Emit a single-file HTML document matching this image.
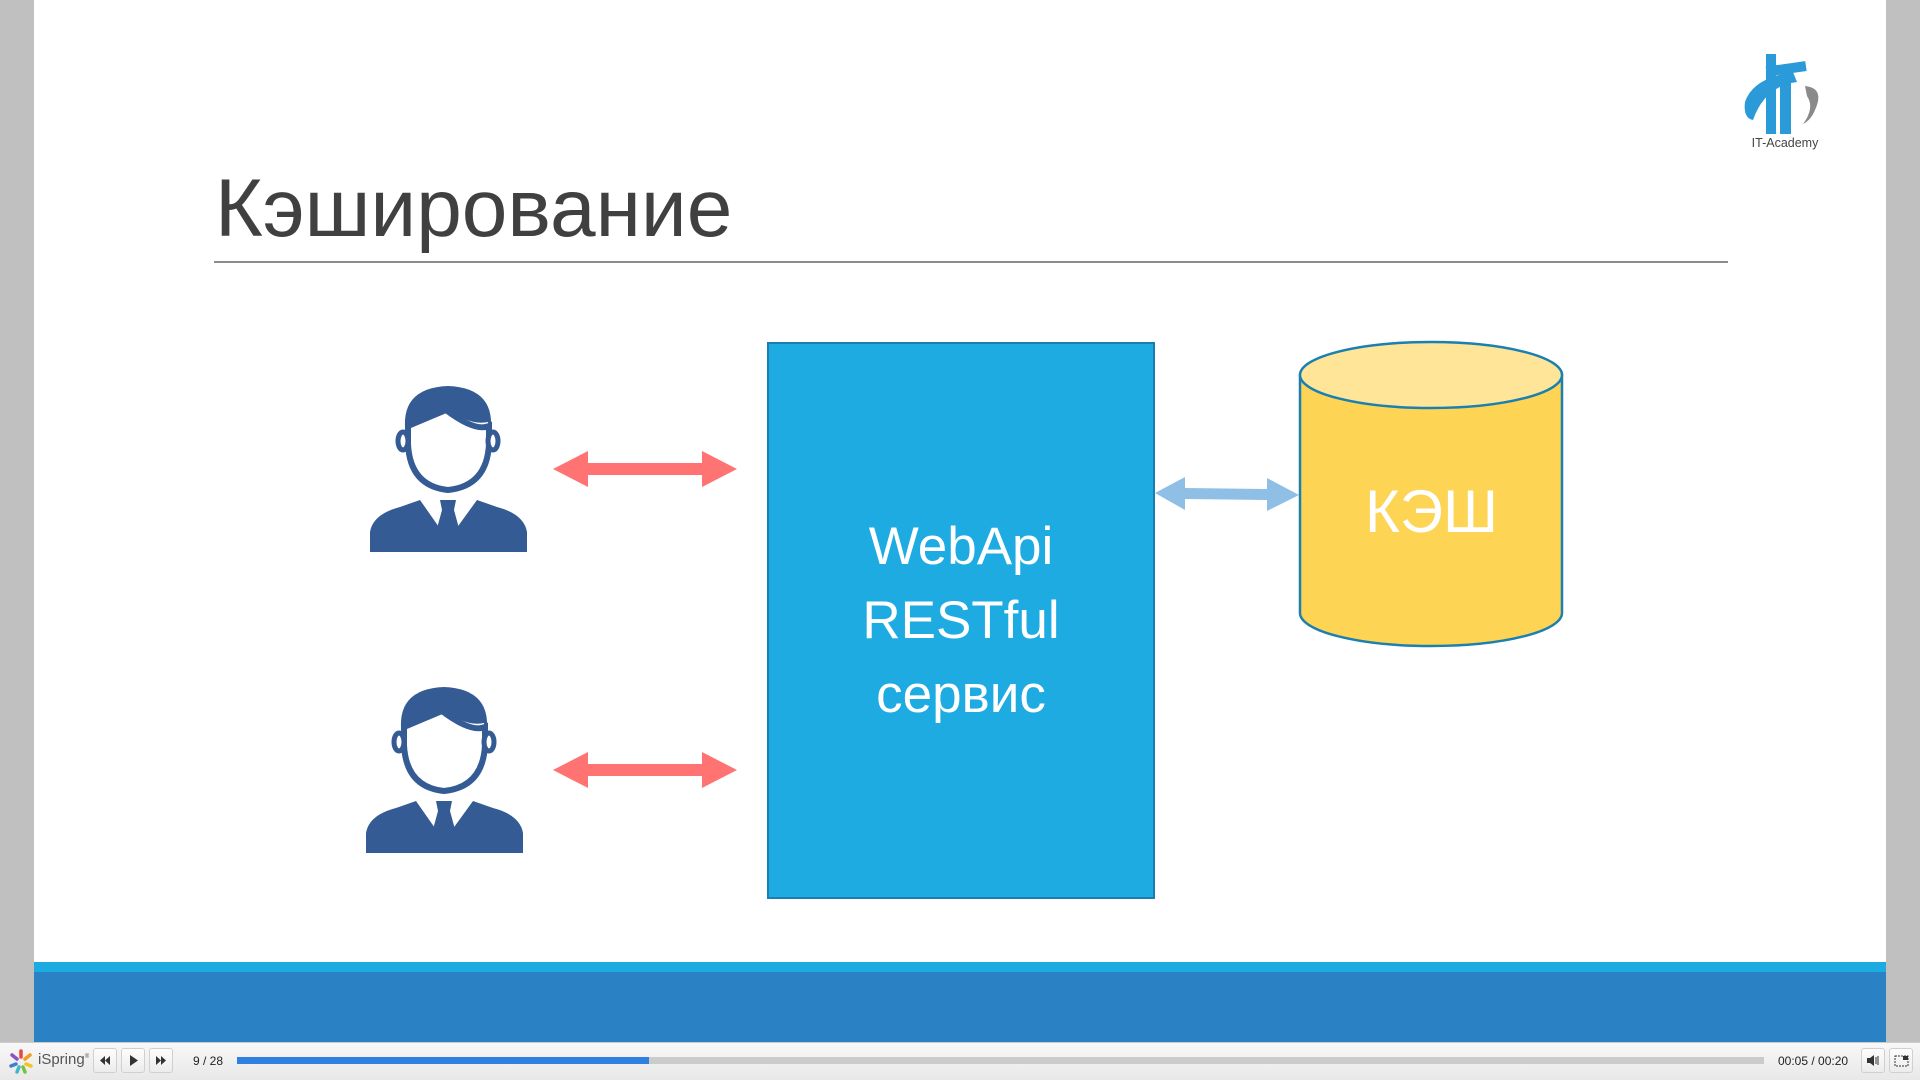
<!DOCTYPE html>
<html><head><meta charset="utf-8"><style>
*{margin:0;padding:0;box-sizing:border-box}
body{width:1920px;height:1080px;position:relative;overflow:hidden;background:#c0c0c0;font-family:"Liberation Sans",sans-serif}
.abs{position:absolute}
#slide{left:34px;top:0;width:1852px;height:1042px;background:#fff}
.btn{position:absolute;top:1048px;width:24px;height:25px;border:1px solid #d0d0d0;border-radius:3px;background:linear-gradient(#fdfdfd,#ececec)}
</style></head><body>
<div class="abs" id="slide"></div>
<div class="abs" style="left:215px;top:168px;font-size:82px;color:#404040;font-weight:300;line-height:1">Кэширование</div>
<div class="abs" style="left:214px;top:261px;width:1514px;height:2px;background:#8c8c8c"></div>

<!-- logo -->
<svg class="abs" style="left:1735px;top:48px" width="100" height="110" viewBox="0 0 100 110">
<path d="M70 38 Q90 40 80 62 Q76 72 68 76 Q80 60 72 48 Z" fill="#8a8a8a"/>
<path d="M10 54 Q18 30 58 24 L62 34 Q30 38 18 72 Q8 70 10 54 Z" fill="#2a9ad8"/>
<rect x="31" y="6" width="10" height="80" fill="#2a9ad8"/>
<rect x="45" y="26" width="11" height="60" fill="#2a9ad8"/>
<rect x="31" y="16" width="40" height="10" fill="#2a9ad8" transform="rotate(-8 50 20)"/>
<text x="50" y="99" font-size="12.5" fill="#444" text-anchor="middle" font-family="Liberation Sans">IT-Academy</text>
</svg>

<!-- persons -->
<svg class="abs" style="left:370px;top:386px" width="157" height="166" viewBox="0 0 157 166">
<path d="M0 166 L0 146 Q3 128 30 121 L50 114 L78 154 L107 114 L127 121 Q154 128 157 146 L157 166 Z" fill="#345b94"/>
<path d="M70 114 L86 114 L84 124 L90 146 L78 156 L66 146 L72 124 Z" fill="#345b94"/>
<path d="M76 24 Q105 46 119 40 L119 58 Q117 100 78 104 Q40 100 38 58 L38 40 Z" fill="#fff" stroke="#345b94" stroke-width="6"/>
<ellipse cx="33" cy="55" rx="5" ry="9" fill="#fff" stroke="#345b94" stroke-width="5"/>
<ellipse cx="123" cy="55" rx="5" ry="9" fill="#fff" stroke="#345b94" stroke-width="5"/>
<path d="M36 50 Q28 2 78 0 Q128 2 120 50 L118 36 Q100 40 76 22 Q56 36 40 40 Z" fill="#345b94"/>
</svg>
<svg class="abs" style="left:366px;top:687px" width="157" height="166" viewBox="0 0 157 166">
<path d="M0 166 L0 146 Q3 128 30 121 L50 114 L78 154 L107 114 L127 121 Q154 128 157 146 L157 166 Z" fill="#345b94"/>
<path d="M70 114 L86 114 L84 124 L90 146 L78 156 L66 146 L72 124 Z" fill="#345b94"/>
<path d="M76 24 Q105 46 119 40 L119 58 Q117 100 78 104 Q40 100 38 58 L38 40 Z" fill="#fff" stroke="#345b94" stroke-width="6"/>
<ellipse cx="33" cy="55" rx="5" ry="9" fill="#fff" stroke="#345b94" stroke-width="5"/>
<ellipse cx="123" cy="55" rx="5" ry="9" fill="#fff" stroke="#345b94" stroke-width="5"/>
<path d="M36 50 Q28 2 78 0 Q128 2 120 50 L118 36 Q100 40 76 22 Q56 36 40 40 Z" fill="#345b94"/>
</svg>

<!-- red arrows -->
<svg class="abs" style="left:550px;top:448px" width="190" height="42" viewBox="0 0 190 42">
<path d="M3 21 L38 3 L38 15 L152 15 L152 3 L187 21 L152 39 L152 27 L38 27 L38 39 Z" fill="#ff7373"/>
</svg>
<svg class="abs" style="left:550px;top:749px" width="190" height="42" viewBox="0 0 190 42">
<path d="M3 21 L38 3 L38 15 L152 15 L152 3 L187 21 L152 39 L152 27 L38 27 L38 39 Z" fill="#ff7373"/>
</svg>

<!-- service box -->
<div class="abs" style="left:767px;top:342px;width:388px;height:557px;background:#1eabe2;border:2px solid #1a7fb0"></div>
<div class="abs" style="left:767px;top:510px;width:388px;text-align:center;color:#fff;font-size:53px;line-height:74px">WebApi<br>RESTful<br>сервис</div>

<!-- blue arrow -->
<svg class="abs" style="left:1153px;top:474px" width="148" height="40" viewBox="0 0 148 40">
<path d="M2 19 L32 3 L32 14 L114 15 L114 4 L146 21 L114 37 L114 26 L32 25 L32 36 Z" fill="#8fbfe4"/>
</svg>

<!-- cylinder -->
<svg class="abs" style="left:1297px;top:339px" width="270" height="311" viewBox="0 0 270 311">
<path d="M3 36 L3 274 A131 33 0 0 0 265 274 L265 36 Z" fill="#fed454" stroke="#1b80b0" stroke-width="2.5"/>
<ellipse cx="134" cy="36" rx="131" ry="33" fill="#fee598" stroke="#1b80b0" stroke-width="2.5"/>
</svg>
<div class="abs" style="left:1300px;top:476px;width:263px;text-align:center;color:#fff;font-size:60px;line-height:72px">КЭШ</div>

<!-- footer -->
<div class="abs" style="left:34px;top:962px;width:1852px;height:10px;background:#1eabe2"></div>
<div class="abs" style="left:34px;top:972px;width:1852px;height:70px;background:#2a82c5"></div>

<!-- player bar -->
<div class="abs" style="left:0;top:1042px;width:1920px;height:38px;background:linear-gradient(#f8f8f8,#e8e8e8);border-top:1px solid #ccc"></div>
<svg class="abs" style="left:8px;top:1049px" width="26" height="26" viewBox="-13 -13 26 26">
<g stroke-width="3.5" stroke-linecap="round">
<line x1="0" y1="-5" x2="0" y2="-11" stroke="#e8473c"/>
<line x1="4" y1="-3" x2="9" y2="-7" stroke="#f39c1f"/>
<line x1="5" y1="2" x2="10" y2="4" stroke="#f6c21b"/>
<line x1="2" y1="5" x2="4" y2="10" stroke="#7ac043"/>
<line x1="-2" y1="5" x2="-4" y2="10" stroke="#3fb7c8"/>
<line x1="-5" y1="2" x2="-10" y2="4" stroke="#3d7fd1"/>
<line x1="-4" y1="-3" x2="-9" y2="-7" stroke="#8a53c5"/>
</g></svg>
<div class="abs" style="left:38px;top:1051px;font-size:15px;color:#555">iSpring<sup style="font-size:6px">®</sup></div>
<div class="btn" style="left:93px"><svg width="22" height="23"><path d="M6 11.5 L11 7 V16 Z M11 11.5 L16 7 V16 Z" fill="#333"/></svg></div>
<div class="btn" style="left:121px"><svg width="22" height="23"><path d="M8 6 L16 11.5 L8 17 Z" fill="#333"/></svg></div>
<div class="btn" style="left:149px"><svg width="22" height="23"><path d="M6 7 L11 11.5 L6 16 Z M11 7 L16 11.5 L11 16 Z" fill="#333"/></svg></div>
<div class="abs" style="left:193px;top:1054px;font-size:12px;color:#222">9 / 28</div>
<div class="abs" style="left:237px;top:1057px;width:1527px;height:7px;background:#cbcbcb"></div>
<div class="abs" style="left:237px;top:1057px;width:412px;height:7px;background:#2f80e0"></div>
<div class="abs" style="left:1778px;top:1054px;font-size:12px;color:#222">00:05 / 00:20</div>
<div class="btn" style="left:1861px"><svg width="22" height="23"><path d="M5 9 H8 L12 6 V17 L8 14 H5 Z" fill="#333"/><path d="M14 8 V15 M16 7 V16" stroke="#333" stroke-width="1"/></svg></div>
<div class="btn" style="left:1889px"><svg width="22" height="23"><rect x="5" y="7" width="13" height="10" fill="none" stroke="#333" stroke-dasharray="2 1"/><rect x="13" y="7" width="5" height="4" fill="#333"/></svg></div>
</body></html>
